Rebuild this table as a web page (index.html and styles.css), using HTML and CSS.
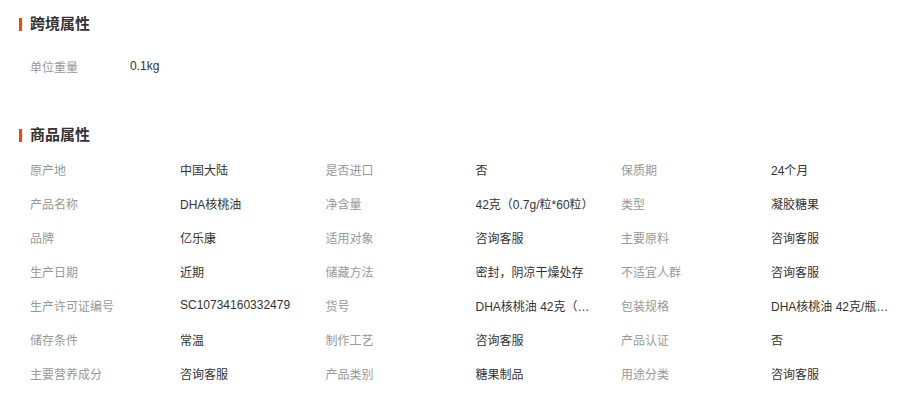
FILE: index.html
```html
<!DOCTYPE html>
<html lang="zh-CN">
<head>
<meta charset="utf-8">
<title>属性</title>
<link rel="stylesheet" href="styles.css">
</head>
<body>
<div class="page">
  <section class="block block-cross">
    <h2 class="block-title"><span class="bar"></span>跨境属性</h2>
    <div class="simple-row">
      <span class="label short">单位重量</span>
      <span class="value">0.1kg</span>
    </div>
  </section>
  <section class="block block-goods">
    <h2 class="block-title"><span class="bar"></span>商品属性</h2>
    <div class="attr-grid">
      <div class="cell"><span class="label">原产地</span><span class="value">中国大陆</span></div>
      <div class="cell"><span class="label">是否进口</span><span class="value">否</span></div>
      <div class="cell"><span class="label">保质期</span><span class="value">24个月</span></div>
      <div class="cell"><span class="label">产品名称</span><span class="value">DHA核桃油</span></div>
      <div class="cell"><span class="label">净含量</span><span class="value wide">42克（0.7g/粒*60粒）</span></div>
      <div class="cell"><span class="label">类型</span><span class="value">凝胶糖果</span></div>
      <div class="cell"><span class="label">品牌</span><span class="value">亿乐康</span></div>
      <div class="cell"><span class="label">适用对象</span><span class="value">咨询客服</span></div>
      <div class="cell"><span class="label">主要原料</span><span class="value">咨询客服</span></div>
      <div class="cell"><span class="label">生产日期</span><span class="value">近期</span></div>
      <div class="cell"><span class="label">储藏方法</span><span class="value">密封，阴凉干燥处存</span></div>
      <div class="cell"><span class="label">不适宜人群</span><span class="value">咨询客服</span></div>
      <div class="cell"><span class="label">生产许可证编号</span><span class="value">SC10734160332479</span></div>
      <div class="cell"><span class="label">货号</span><span class="value">DHA核桃油 42克（0.7g/粒*60粒）</span></div>
      <div class="cell"><span class="label">包装规格</span><span class="value">DHA核桃油 42克/瓶装（60粒）</span></div>
      <div class="cell"><span class="label">储存条件</span><span class="value">常温</span></div>
      <div class="cell"><span class="label">制作工艺</span><span class="value">咨询客服</span></div>
      <div class="cell"><span class="label">产品认证</span><span class="value">否</span></div>
      <div class="cell"><span class="label">主要营养成分</span><span class="value">咨询客服</span></div>
      <div class="cell"><span class="label">产品类别</span><span class="value">糖果制品</span></div>
      <div class="cell"><span class="label">用途分类</span><span class="value">咨询客服</span></div>
    </div>
  </section>
</div>
</body>
</html>
```

FILE: styles.css
```css
* { box-sizing: border-box; }
html, body {
  margin: 0;
  padding: 0;
  background: #fff;
}
body {
  font-family: "Liberation Sans", "Noto Sans CJK SC", sans-serif;
  font-size: 12px;
  color: #333;
}
.page {
  padding: 14px 0 0 19px;
}
.block-title {
  display: flex;
  align-items: center;
  gap: 8px;
  height: 20px;
  line-height: 20px;
  margin: 0;
  font-size: 15px;
  font-weight: bold;
  color: #333;
}
.bar {
  flex: none;
  width: 3px;
  height: 13px;
  background: #ff4400;
}
.simple-row {
  display: flex;
  align-items: center;
  height: 34px;
  margin-top: 15px;
  padding-left: 11px;
}
.label {
  color: #999;
  width: 150px;
  flex: none;
  white-space: nowrap;
}
.label.short { width: 100px; }
.value {
  min-width: 0;
  color: #333;
  white-space: nowrap;
  overflow: hidden;
  text-overflow: ellipsis;
  max-width: 118px;
}
.value.wide { max-width: 140px; }
.block-goods { margin-top: 42px; }
.attr-grid {
  display: grid;
  grid-template-columns: repeat(3, 295.5px);
  grid-auto-rows: 34px;
  margin-top: 7px;
  padding-left: 11px;
}
.cell {
  display: flex;
  align-items: center;
  min-width: 0;
  overflow: hidden;
}
```
